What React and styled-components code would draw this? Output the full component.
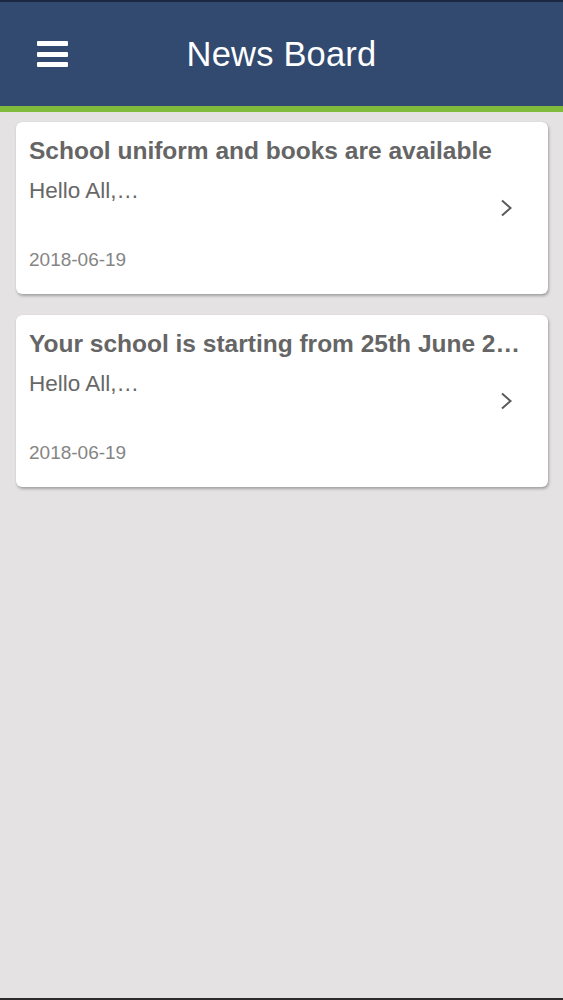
import React from "react";
import styled, { createGlobalStyle } from "styled-components";

const Global = createGlobalStyle`
  html, body { margin: 0; padding: 0; }
  body {
    font-family: "Liberation Sans", Arial, Helvetica, sans-serif;
    background: #e4e2e3;
  }
  * { box-sizing: border-box; }
`;

const Screen = styled.div`
  width: 563px;
  height: 1000px;
  display: flex;
  flex-direction: column;
  background: #e4e2e3;
  border-bottom: 2px solid #2b2b2b;
  overflow: hidden;
`;

const Header = styled.header`
  height: 106px;
  flex-shrink: 0;
  background: #324a6f;
  border-top: 2px solid #1b2740;
  display: flex;
  align-items: center;
  justify-content: center;
  position: relative;
`;

const MenuButton = styled.button`
  position: absolute;
  left: 37px;
  top: 50%;
  transform: translateY(-50%);
  width: 31px;
  height: 26px;
  padding: 0;
  border: 0;
  background: transparent;
  display: flex;
  flex-direction: column;
  justify-content: space-between;
`;

const MenuBar = styled.span`
  display: block;
  height: 5px;
  border-radius: 1px;
  background: #ffffff;
`;

const Title = styled.h1`
  margin: 0;
  color: #ffffff;
  font-size: 34.5px;
  font-weight: 400;
  letter-spacing: 0.2px;
`;

const Accent = styled.div`
  height: 6px;
  flex-shrink: 0;
  background: #80bb3b;
`;

const List = styled.main`
  display: flex;
  flex-direction: column;
  gap: 21px;
  padding: 10px 15px 0 16px;
`;

const Card = styled.article`
  position: relative;
  background: #ffffff;
  border-radius: 6px;
  box-shadow: 1px 2px 3px rgba(0, 0, 0, 0.28), 0 0 1px rgba(0, 0, 0, 0.15);
  padding: 15px 25px 23px 13px;
  display: flex;
  flex-direction: column;
`;

const CardTitle = styled.h2`
  margin: 0;
  font-size: 24.5px;
  line-height: 28px;
  font-weight: 700;
  color: #656565;
  white-space: nowrap;
  overflow: hidden;
  text-overflow: ellipsis;
`;

const Excerpt = styled.p`
  margin: 13px 0 0;
  font-size: 22.5px;
  line-height: 26px;
  color: #676767;
`;

const DateText = styled.time`
  display: block;
  margin-top: 45px;
  font-size: 19px;
  line-height: 22px;
  color: #858585;
`;

const Chevron = styled.svg`
  position: absolute;
  right: 35px;
  top: 50%;
  transform: translateY(-50%);
`;

const news = [
  { title: "School uniform and books are available", excerpt: "Hello All,…", date: "2018-06-19" },
  { title: "Your school is starting from 25th June 2018", excerpt: "Hello All,…", date: "2018-06-19" },
];

export default function App() {
  return (
    <>
      <Global />
      <Screen>
        <Header>
          <MenuButton aria-label="Menu">
            <MenuBar />
            <MenuBar />
            <MenuBar />
          </MenuButton>
          <Title>News Board</Title>
        </Header>
        <Accent />
        <List>
          {news.map((n, i) => (
            <Card key={i}>
              <CardTitle>{n.title}</CardTitle>
              <Excerpt>{n.excerpt}</Excerpt>
              <DateText>{n.date}</DateText>
              <Chevron width="13" height="19" viewBox="0 0 13 19">
                <path d="M2 2 L10.5 9.5 L2 17" fill="none" stroke="#5a5a5a" strokeWidth="2" />
              </Chevron>
            </Card>
          ))}
        </List>
      </Screen>
    </>
  );
}
